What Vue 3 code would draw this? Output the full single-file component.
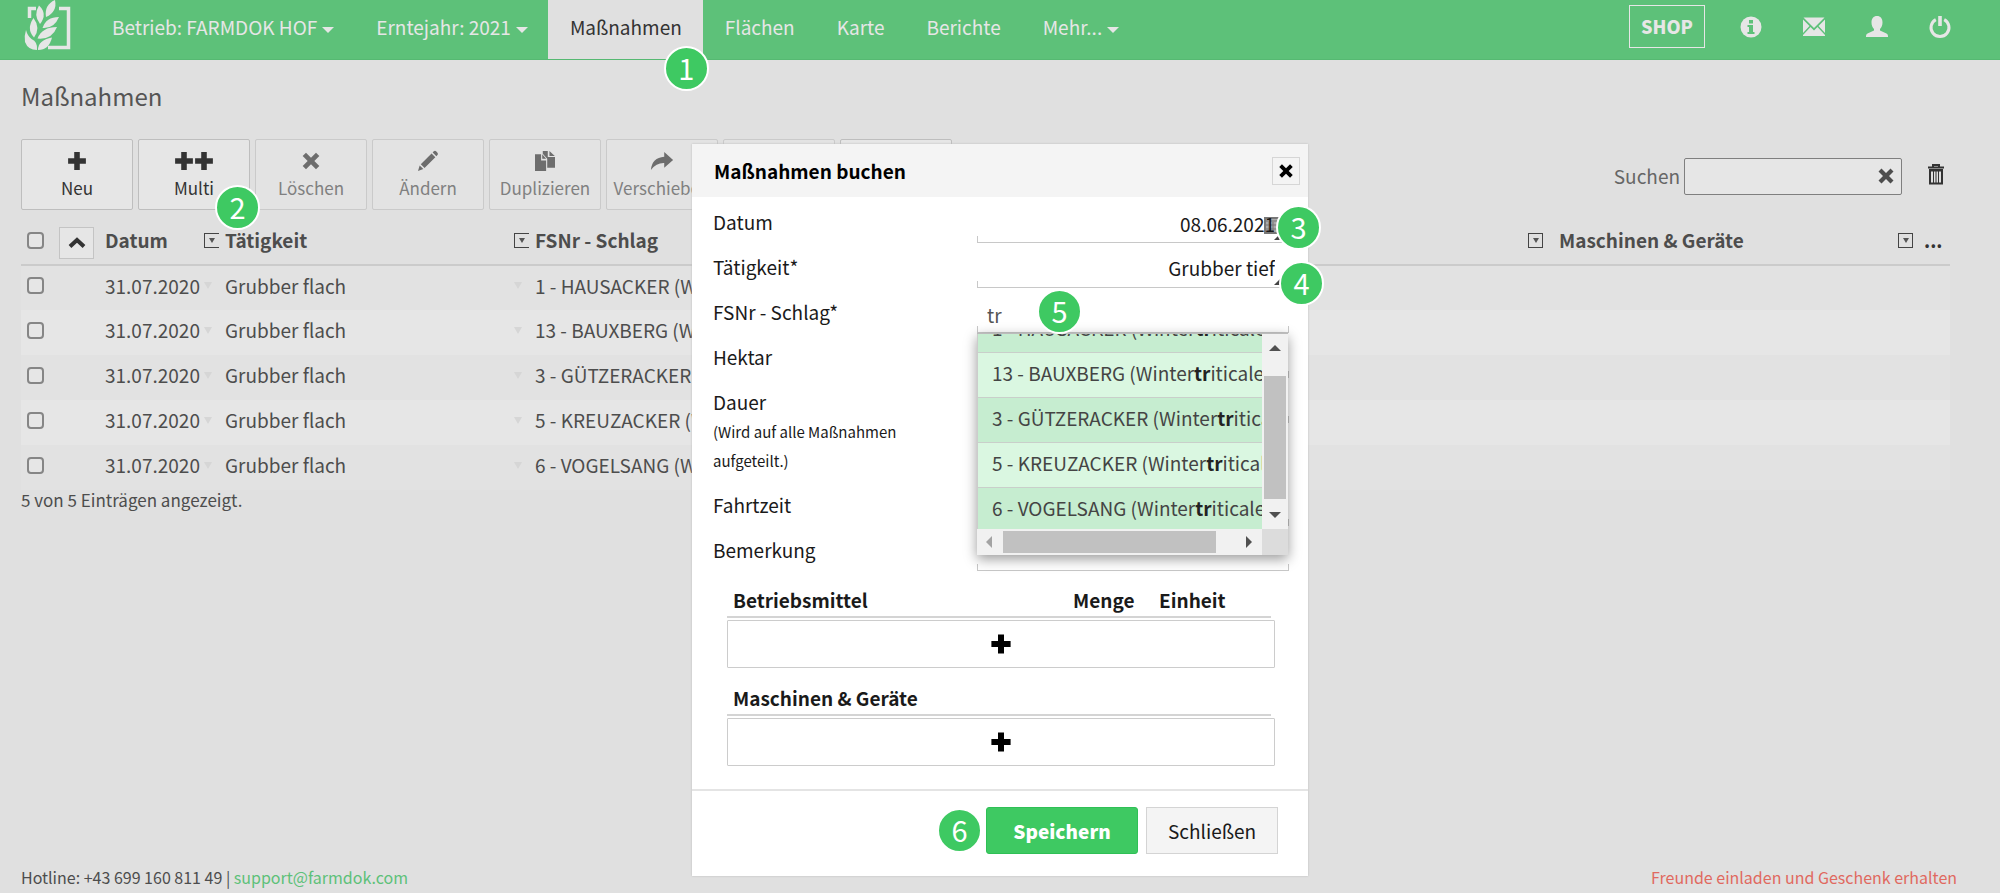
<script setup>
import { ref, onMounted } from 'vue'

const icons = {
  plus: 'M7.5 2h5v5.5H18v5h-5.500V18h-5v-5.500H2v-5h5.500z',
  cross: 'M5.500 2.500 10 7l4.500-4.500 3 3L13 10l4.500 4.500-3 3L10 13l-4.500 4.500-3-3L7 10 2.500 5.500z',
  pencil: 'M1 19l1.500-5L5.800 17.300zM3.500 13 13.200 3.300l3.400 3.400L6.900 16.400zM14.200 2.300l1-1q1.200-1 2.300.2l1 1q1 1.200 0 2.200l-1 1z',
  copy: 'M1 4h5.500v5.500H11V19H1zM7.500 4l3.500 4H7.500zM9 1h3.500v5.500H19V16h-7V8L8 3.500V1zM14 1l4.800 4.500H14z',
  share: 'M12 2l8 7-8 7v-4.200Q5 11.500 0 18 1 7 12 6.200z',
}

const tools = [
  { label: 'Neu', icons: ['plus'], enabled: true },
  { label: 'Multi', icons: ['plus', 'plus'], enabled: true, step: 2 },
  { label: 'Löschen', icons: ['cross'] },
  { label: 'Ändern', icons: ['pencil'] },
  { label: 'Duplizieren', icons: ['copy'] },
  { label: 'Verschieben', icons: ['share'] },
  { label: '', icons: [] },
  { label: '', icons: [], enabled: true },
]

const rows = ['1 - HAUSACKER', '13 - BAUXBERG', '3 - GÜTZERACKER', '5 - KREUZACKER', '6 - VOGELSANG']

const search = ref('')
const datum = ref('08.06.2021')
const schlag = ref('tr')
const list = ref(null)

onMounted(() => {
  list.value.scrollTop = 26
})
</script>

<template>
  <div class="page">
    <header class="nav">
      <a class="logo" href="#" aria-label="FARMDOK">
        <svg width="48" height="52" viewBox="0 0 48 52" fill="#e6e6e6">
          <path d="M12 8.500H5.500V18M35 8.500H44.500V47.500H24" fill="none" stroke="#e6e6e6" stroke-width="3.500" />
          <path d="M31 0Q33.500 12 22 17 20 5 31 0z" />
          <path d="M15 5.500Q24 14 16 24 9 15 15 5.500z" />
          <path d="M35 17Q30 29 18.500 28 22 17 35 17z" />
          <path d="M9.500 18Q17 28 10 37.500 2 29 9.500 18z" />
          <path d="M33 27Q28 40 13.500 38.500 18 27 33 27z" />
          <path d="M2 30Q0 36 1 42 4 50 13 50 14 42 7.500 39 3.500 36 2 30z" />
          <path d="M28 37.500Q25 50 14 50 14 40 28 37.500z" />
        </svg>
      </a>
      <nav class="menu">
        <a href="#">Betrieb: FARMDOK HOF<i class="caret"></i></a>
        <a href="#">Erntejahr: 2021<i class="caret"></i></a>
        <a href="#" class="active">Maßnahmen<span class="step step-1">1</span></a>
        <a href="#">Flächen</a>
        <a href="#">Karte</a>
        <a href="#">Berichte</a>
        <a href="#">Mehr...<i class="caret"></i></a>
      </nav>
      <div class="right">
        <a class="shop" href="#">SHOP</a>
        <a href="#" aria-label="Info">
          <svg width="22" height="22" viewBox="0 0 22 22"><circle cx="11" cy="11" r="10.500" fill="#e6e6e6" /><path d="M9 4h4v3.500H9zM7.500 9H13v7h1.500v2h-7v-2H9v-5H7.500z" fill="#5dc179" /></svg>
        </a>
        <a href="#" aria-label="Nachrichten">
          <svg width="22" height="22" viewBox="0 0 22 22" fill="#e6e6e6"><path d="M.500 1.500h21L11 12zM0 3.500 6.500 10 0 17zM22 3.500 15.500 10 22 17zM7.500 11 11 14.500 14.500 11 22 19v1H0v-1z" /></svg>
        </a>
        <a href="#" aria-label="Profil">
          <svg width="22" height="22" viewBox="0 0 22 22" fill="#e6e6e6"><path d="M11 0c3.500 0 5.500 2.500 5.500 6.500 0 3-1 5-2.500 6.500v1.500l6.500 3q1.500.8 1.500 2.500v1H0v-1q0-1.700 1.500-2.500l6.500-3V13C6.500 11.500 5.500 9.500 5.500 6.500 5.500 2.500 7.500 0 11 0z" /></svg>
        </a>
        <a href="#" aria-label="Abmelden">
          <svg width="22" height="22" viewBox="0 0 22 22"><path d="M6.800 3.600A9 9 0 1 0 15.200 3.600" fill="none" stroke="#e6e6e6" stroke-width="3" /><path d="M9.200 0h3.600v10H9.200z" fill="#e6e6e6" /></svg>
        </a>
      </div>
    </header>

    <main class="content">
      <h1>Maßnahmen</h1>
      <div class="bar">
        <div class="tools">
          <div v-for="(t, i) in tools" :key="i" class="tool">
            <button type="button" :disabled="!t.enabled">
              <span class="glyphs">
                <svg v-for="(n, k) in t.icons" :key="k" width="20" height="20" viewBox="1 1 18 18" fill="currentColor"><path :d="icons[n]" /></svg>
              </span>
              {{ t.label }}
            </button>
            <span v-if="t.step" class="step step-2">{{ t.step }}</span>
          </div>
        </div>
        <div class="search">
          <label for="search">Suchen</label>
          <div class="search-box">
            <input id="search" v-model="search" type="text" />
            <button type="button" aria-label="Suche leeren" @click="search = ''">
              <svg width="20" height="20" viewBox="0 0 20 20" fill="#4d4d4d"><path :d="icons.cross" /></svg>
            </button>
          </div>
          <button type="button" class="trash" aria-label="Papierkorb">
            <svg width="18" height="22" viewBox="0 0 18 22"><path d="M1 4.500h16M6 4V2h6v2" fill="none" stroke="#333" stroke-width="2" /><path d="M3 7v13.500h12V7z" fill="none" stroke="#333" stroke-width="2" /><path d="M6.500 7v13M9 7v13M11.500 7v13" stroke="#333" stroke-width="1" /><path d="M2 7.500h14" stroke="#333" stroke-width="2" /></svg>
          </button>
        </div>
      </div>

      <table class="grid">
        <colgroup>
          <col class="c-check" /><col class="c-sort" /><col class="c-date" /><col class="c-task" /><col /><col class="c-mach" /><col class="c-more" />
        </colgroup>
        <thead>
          <tr>
            <th><input type="checkbox" aria-label="Alle auswählen" /></th>
            <th>
              <button type="button" class="sort" aria-label="Sortieren">
                <svg width="18" height="18" viewBox="0 0 18 18"><path d="M2 12.500 9 6l7 6.500" fill="none" stroke="#333" stroke-width="4" /></svg>
              </button>
            </th>
            <th><div class="head">Datum<i class="filter cut"></i></div></th>
            <th><div class="head">Tätigkeit<i class="filter cut"></i></div></th>
            <th><div class="head">FSNr - Schlag<i class="filter"></i></div></th>
            <th class="mach"><div class="head">Maschinen &amp; Geräte<i class="filter"></i></div></th>
            <th class="more">...</th>
          </tr>
        </thead>
        <tbody>
          <tr v-for="r in rows" :key="r">
            <td><input type="checkbox" :aria-label="r" /></td>
            <td></td>
            <td><div class="head">31.07.2020<i class="mark"></i></div></td>
            <td><div class="head">Grubber flach<i class="mark"></i></div></td>
            <td>{{ r }} (Wintertriticale)</td>
            <td></td>
            <td></td>
          </tr>
        </tbody>
      </table>
      <p class="count">5 von 5 Einträgen angezeigt.</p>
    </main>

    <footer class="foot">
      <span>Hotline: +43 699 160 811 49 | <a href="mailto:support@farmdok.com">support@farmdok.com</a></span>
      <a href="#" class="invite">Freunde einladen und Geschenk erhalten</a>
    </footer>

    <div class="overlay">
      <section class="modal" role="dialog" aria-labelledby="dlg">
        <header class="modal-head">
          <h2 id="dlg">Maßnahmen buchen</h2>
          <button type="button" class="close" aria-label="Dialog schließen">
            <svg width="18" height="18" viewBox="0 0 20 20"><path :d="icons.cross" /></svg>
          </button>
        </header>
        <form class="form" @submit.prevent>
          <div class="field">
            <label for="datum">Datum</label>
            <div class="box">
              <svg class="cal" width="16" height="18" viewBox="0 0 16 18"><path d="M1 2h14v15H1z" fill="#aaa" stroke="#777" stroke-width="2" /><path d="M1 5h14M5 6v11M9 6v11M1 9h14M1 13h14" stroke="#777" stroke-width="1" /></svg>
              <input id="datum" v-model="datum" type="text" />
              <i class="corner"></i>
              <span class="step step-3">3</span>
            </div>
          </div>
          <div class="field">
            <label for="task">Tätigkeit*</label>
            <div class="box">
              <select id="task"><option>Grubber tief</option></select>
              <i class="corner"></i>
              <span class="step step-4">4</span>
            </div>
          </div>
          <div class="field">
            <label for="schlag">FSNr - Schlag*</label>
            <div class="box">
              <input id="schlag" v-model="schlag" type="text" class="query" />
              <span class="step step-5">5</span>
              <div class="drop">
                <ul ref="list">
                  <li v-for="r in rows" :key="r">{{ r }} (Winter<b>tr</b>iticale)</li>
                </ul>
                <div class="vbar"><i class="up"></i><i class="vthumb"></i><i class="down"></i></div>
                <div class="hbar"><i class="left"></i><i class="hthumb"></i><i class="rgt"></i></div>
                <div class="edge"></div>
              </div>
            </div>
          </div>
          <div class="field">
            <label for="hektar">Hektar</label>
            <div class="box"><input id="hektar" type="text" /></div>
          </div>
          <div class="field tall">
            <label for="dauer">Dauer<small>(Wird auf alle Maßnahmen aufgeteilt.)</small></label>
            <div class="box"><input id="dauer" type="text" /></div>
          </div>
          <div class="field">
            <label for="fahrt">Fahrtzeit</label>
            <div class="box"><input id="fahrt" type="text" /></div>
          </div>
          <div class="field">
            <label for="bem">Bemerkung</label>
            <div class="box"><input id="bem" type="text" /></div>
          </div>

          <div class="group">
            <div class="group-head"><span class="first">Betriebsmittel</span><span class="menge">Menge</span><span class="einheit">Einheit</span></div>
            <button type="button" class="add" aria-label="Betriebsmittel hinzufügen">
              <svg width="24" height="24" viewBox="0 0 20 20"><path :d="icons.plus" /></svg>
            </button>
          </div>
          <div class="group">
            <div class="group-head"><span class="first">Maschinen &amp; Geräte</span></div>
            <button type="button" class="add" aria-label="Maschinen hinzufügen">
              <svg width="24" height="24" viewBox="0 0 20 20"><path :d="icons.plus" /></svg>
            </button>
          </div>
          <div class="actions">
            <span class="step step-6">6</span>
            <button type="submit" class="save">Speichern</button>
            <button type="button" class="cancel">Schließen</button>
          </div>
        </form>
      </section>
    </div>
  </div>
</template>

<style>
body { background: #e0e0e0; }
</style>

<style scoped>
* { box-sizing: border-box; }
.page { min-height: 100vh; display: flex; flex-direction: column; position: relative; font: 19px/24px "Noto Sans CJK SC", "Source Sans Pro", sans-serif; color: #4d4d4d; background: #e0e0e0; }
button, input, select { font: inherit; color: inherit; margin: 0; padding: 0; border: 0; background: none; border-radius: 0; }
a { color: inherit; text-decoration: none; }
svg { display: block; flex: none; overflow: visible; }
h1, h2, p, ul { margin: 0; padding: 0; font-weight: 400; }

.nav { height: 60px; display: flex; background: #5dc179; color: #e6e6e6; border-bottom: 1px solid #56b972; }
.logo { width: 90px; padding-left: 24px; }
.menu { display: flex; flex: 1; }
.menu a { display: flex; align-items: center; padding: 0 20px 5px 22px; position: relative; white-space: nowrap; }
.menu .active { background: #e0e0e0; color: #333; padding-right: 21px; }
.caret { border: 6px solid transparent; border-top-color: currentColor; border-bottom: 0; margin: 5px 0 0 5px; }
.right { display: flex; align-items: center; gap: 41px; padding: 0 49px 6px 0; }
.shop { width: 76px; height: 43px; border: 1px solid #e6e6e6; font-weight: 900; font-size: 18px; line-height: 41px; text-align: center; margin-right: -6px; }

.step { position: absolute; z-index: 5; width: 45px; height: 45px; border: 2px solid #fff; border-radius: 50%; background: #3ec962; color: #fff; font: 29px/39px "Noto Sans CJK SC", sans-serif; text-align: center; }
.step-1 { right: -6px; top: 46px; }
.step-2 { right: -10px; top: 46px; }
.step-3 { right: -32px; top: 8px; }
.step-4 { right: -35px; top: 19px; }
.step-5 { left: 60px; top: 2px; }
.step-6 { left: 245px; top: 17px; }

.content { flex: 1; padding: 23px 50px 0 21px; }
h1 { font-size: 24px; line-height: 26px; color: #555; }
.bar { display: flex; justify-content: space-between; margin-top: 30px; }
.tools { display: flex; gap: 5px; }
.tool { position: relative; }
.tool button { width: 112px; height: 71px; border: 1px solid #bebebe; border-radius: 2px; background: #e6e6e6; color: #333; font-size: 17px; line-height: 22px; display: flex; flex-direction: column; align-items: center; padding-top: 11px; gap: 6px; }
.tool button:disabled { color: #808080; border-color: #cacaca; background: #e3e3e3; }
.tool button:disabled svg { color: #6d6d6d; }
.glyphs { display: flex; }
.search { display: flex; align-items: center; height: 37px; margin: 19px 5px 0 0; color: #666; }
.search label { padding-bottom: 2px; }
.search-box { position: relative; margin-left: 4px; width: 218px; }
.search-box input { width: 100%; height: 37px; border: 1px solid #7f7f7f; border-radius: 2px; background: #e6e6e6; display: block; padding: 0 34px 0 8px; }
.search-box button { position: absolute; right: 6px; top: 8px; }
.trash { margin-left: 25px; padding-bottom: 5px; }

.grid { width: 100%; border-collapse: collapse; table-layout: fixed; margin-top: 13px; }
.c-check { width: 38px; } .c-sort { width: 40px; } .c-date { width: 120px; } .c-task { width: 310px; } .c-mach { width: 370px; } .c-more { width: 37px; }
.grid th, .grid td { padding: 0 0 0 6px; text-align: left; white-space: nowrap; }
.grid th { height: 42px; font-weight: 700; vertical-align: middle; padding-bottom: 7px; border-bottom: 2px solid #cbcbcb; }
.grid th:nth-child(2) { padding: 0 0 2px; }
.grid td { height: 45px; padding-bottom: 5px; }
.grid tbody tr:nth-child(odd) { background: #e2e2e2; }
.grid tbody tr:nth-child(even) { background: #e6e6e6; }
.grid th.mach { padding-left: 16px; }
.grid th.more { padding-left: 11px; color: #333; }
.grid input { appearance: none; display: block; width: 17px; height: 17px; border: 2px solid #868686; border-radius: 4px; background: #e6e6e6; }
.sort { display: flex; align-items: center; justify-content: center; width: 35px; height: 32px; border: 1px solid #c4c4c4; background: #e6e6e6; }
.head { display: flex; justify-content: space-between; align-items: center; }
.filter { width: 15px; height: 15px; border: 1px solid #444; display: flex; align-items: center; justify-content: center; }
.filter.cut { border-right: 0; }
.filter::after { content: ""; border: 3px solid transparent; border-top: 5px solid #555; border-bottom: 0; }
.mark { border: 4px solid transparent; border-top: 7px solid #d6d6d6; border-bottom: 0; margin-right: 7px; }
.count { font-size: 17px; line-height: 20px; }
.foot { display: flex; justify-content: space-between; padding: 0 43px 5px 21px; font-size: 16px; line-height: 22px; }
.foot a { color: #5dc179; }
.foot .invite { color: #e0695f; }

.overlay { position: absolute; inset: 0; display: flex; justify-content: center; align-items: flex-start; padding-top: 144px; }
.modal { width: 616px; background: #fff; color: #1a1a1a; box-shadow: 0 0 2px #bbb; }
.modal-head { height: 53px; background: #f4f4f4; display: flex; align-items: center; justify-content: space-between; padding: 0 8px 0 22px; }
h2 { font-size: 19px; font-weight: 700; color: #000; }
.close { width: 28px; height: 28px; border: 1px solid #d6d6d6; display: flex; align-items: center; justify-content: center; }
.field { display: flex; justify-content: space-between; height: 45px; padding: 0 19px 0 21px; }
.field.tall { height: 103px; }
.field label { width: 220px; padding-top: 13px; }
.field small { display: block; margin-top: 3px; font-size: 15px; line-height: 29px; }
.box { position: relative; width: 312px; height: 46px; border-bottom: 1px solid #c8c8c8; }
.box::before { content: ""; position: absolute; left: 0; right: 0; bottom: 0; height: 6px; border: solid #c8c8c8; border-width: 0 1px; }
.box input, .box select { position: relative; display: block; width: 298px; height: 32px; margin-top: 10px; text-align: right; outline: 0; appearance: none; }
.box select { text-align-last: right; }
.box .query { text-align: left; padding: 2px 0 0 10px; color: #555; }
.cal { position: absolute; right: 9px; top: 19px; }
.corner { position: absolute; right: 9px; bottom: 2px; border: 3px solid #444; border-top-color: transparent; border-left-color: transparent; }
.drop { position: absolute; z-index: 4; left: 0; top: 46px; width: 311px; display: grid; grid-template: 195px 26px / minmax(0, 1fr) 26px; box-shadow: 0 4px 12px rgba(0, 0, 0, .4); background: #f1f1f1; border-top: 1px solid #bbb; }
.drop ul { list-style: none; overflow: auto; scrollbar-width: none; border-left: 1px solid #ccc; }
.drop li { height: 45px; padding: 8px 0 0 14px; border-bottom: 1px solid #c9cfca; background: #c6edd0; color: #444; white-space: nowrap; overflow: hidden; }
.drop li:nth-child(even) { background: #daf7e1; }
.drop b { color: #222; }
.vbar { display: flex; flex-direction: column; align-items: center; padding: 11px 0; }
.vthumb { width: 22px; height: 123px; background: #c1c1c1; margin: 25px 0 13px; }
.hbar { display: flex; align-items: center; padding: 0 9px; }
.hthumb { width: 213px; height: 22px; background: #c1c1c1; margin: 0 30px 0 11px; }
.edge { background: #dcdcdc; }
.up, .down, .left, .rgt { border: 6px solid transparent; }
.up { border-top: 0; border-bottom-color: #505050; }
.down { border-bottom: 0; border-top-color: #505050; }
.left { border-left: 0; border-right-color: #a3a3a3; }
.rgt { border-right: 0; border-left-color: #505050; }

.group { padding: 0 33px 0 35px; margin-top: 18px; }
.group-head { display: flex; height: 30px; margin: 0 4px 2px 0; padding-left: 6px; border-bottom: 2px solid #d4d4d4; font-weight: 700; line-height: 23px; }
.first { flex: 1; }
.menge { width: 86px; }
.einheit { width: 112px; }
.add { width: 100%; height: 48px; border: 1px solid #ccc; border-radius: 1px; display: flex; align-items: center; justify-content: center; padding-right: 1px; }
.actions { position: relative; display: flex; justify-content: flex-end; gap: 8px; margin-top: 23px; padding: 16px 30px 22px; border-top: 2px solid #e4e4e4; }
.save { width: 152px; height: 47px; border: 1px solid #2fc056; border-radius: 3px; background: #3ec962; color: #fff; font-weight: 900; }
.cancel { width: 132px; height: 47px; border: 1px solid #d4d4d4; background: #f4f4f4; }
</style>
